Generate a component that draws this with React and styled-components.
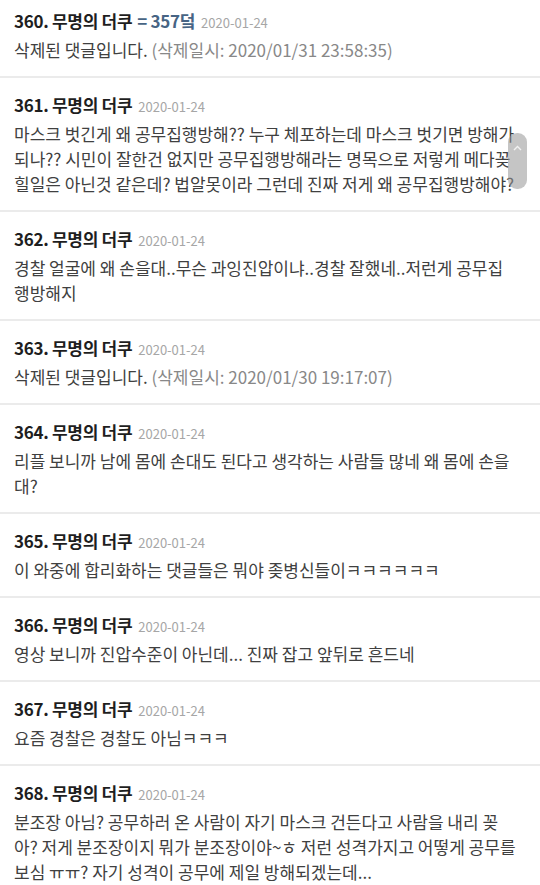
import React from "react";
import styled, { createGlobalStyle } from "styled-components";

const GlobalStyle = createGlobalStyle`
  html, body {
    margin: 0;
    padding: 0;
    background: #fff;
  }
  body {
    font-family: "Noto Sans CJK KR", "Noto Sans", sans-serif;
  }
`;

const Page = styled.div`
  position: relative;
  width: 540px;
  height: 885px;
  overflow: hidden;
  background: #fff;
`;

const List = styled.div`
  display: flex;
  flex-direction: column;
`;

const Comment = styled.div`
  padding: ${({ $first }) => ($first ? "9px" : "15px")} 14px 14px 14px;
  border-bottom: 2px solid #ebebeb;
`;

const Header = styled.div`
  display: flex;
  align-items: baseline;
  height: 24px;
  line-height: 24px;
  margin-bottom: 4px;
  white-space: nowrap;
`;

const Author = styled.span`
  font-size: 17px;
  font-weight: 700;
  color: #1e1e1e;
  letter-spacing: -0.3px;
`;

const Tag = styled.span`
  font-size: 17px;
  font-weight: 700;
  color: #476484;
  margin-left: 5px;
  letter-spacing: -0.3px;
`;

const DateText = styled.span`
  font-size: 13px;
  color: #a6a6a6;
  margin-left: 6px;
`;

const Body = styled.div`
  font-size: 17px;
  line-height: 25px;
  color: #404040;
`;

const Line = styled.span`
  display: block;
  white-space: nowrap;
`;

const Muted = styled.span`
  color: #888;
`;

const ScrollThumb = styled.div`
  position: absolute;
  top: 133px;
  right: 13px;
  width: 19px;
  height: 56px;
  border-radius: 9px;
  background: rgba(150, 150, 150, 0.55);
  display: flex;
  justify-content: center;
  padding-top: 12px;
  box-sizing: border-box;
`;

const comments = [
  {
    no: 360,
    tag: "= 357덬",
    deleted: "(삭제일시: 2020/01/31 23:58:35)",
  },
  {
    no: 361,
    lines: [
      "마스크 벗긴게 왜 공무집행방해?? 누구 체포하는데 마스크 벗기면 방해가",
      "되나?? 시민이 잘한건 없지만 공무집행방해라는 명목으로 저렇게 메다꽂",
      "힐일은 아닌것 같은데? 법알못이라 그런데 진짜 저게 왜 공무집행방해야?",
    ],
  },
  {
    no: 362,
    lines: [
      "경찰 얼굴에 왜 손을대..무슨 과잉진압이냐..경찰 잘했네..저런게 공무집",
      "행방해지",
    ],
  },
  { no: 363, deleted: "(삭제일시: 2020/01/30 19:17:07)" },
  {
    no: 364,
    lines: [
      "리플 보니까 남에 몸에 손대도 된다고 생각하는 사람들 많네 왜 몸에 손을",
      "대?",
    ],
  },
  { no: 365, lines: ["이 와중에 합리화하는 댓글들은 뭐야 좆병신들이ㅋㅋㅋㅋㅋㅋ"] },
  { no: 366, lines: ["영상 보니까 진압수준이 아닌데... 진짜 잡고 앞뒤로 흔드네"] },
  { no: 367, lines: ["요즘 경찰은 경찰도 아님ㅋㅋㅋ"] },
  {
    no: 368,
    lines: [
      "분조장 아님? 공무하러 온 사람이 자기 마스크 건든다고 사람을 내리 꽂",
      "아? 저게 분조장이지 뭐가 분조장이야~ㅎ 저런 성격가지고 어떻게 공무를",
      "보심 ㅠㅠ? 자기 성격이 공무에 제일 방해되겠는데...",
    ],
  },
];

const App = () => {
  return (
    <>
      <GlobalStyle />
      <Page>
        <List>
          {comments.map((c, i) => (
            <Comment key={c.no} $first={i === 0}>
              <Header>
                <Author>{c.no}. 무명의 더쿠</Author>
                {c.tag && <Tag>{c.tag}</Tag>}
                <DateText>2020-01-24</DateText>
              </Header>
              <Body>
                {c.deleted ? (
                  <Line>
                    삭제된 댓글입니다. <Muted>{c.deleted}</Muted>
                  </Line>
                ) : (
                  c.lines.map((l) => <Line key={l}>{l}</Line>)
                )}
              </Body>
            </Comment>
          ))}
        </List>
        <ScrollThumb>
          <svg width="9" height="6" viewBox="0 0 9 6">
            <path
              d="M1 5 L4.5 1.5 L8 5"
              fill="none"
              stroke="#f2f2f2"
              strokeWidth="1.4"
            />
          </svg>
        </ScrollThumb>
      </Page>
    </>
  );
};

export default App;
